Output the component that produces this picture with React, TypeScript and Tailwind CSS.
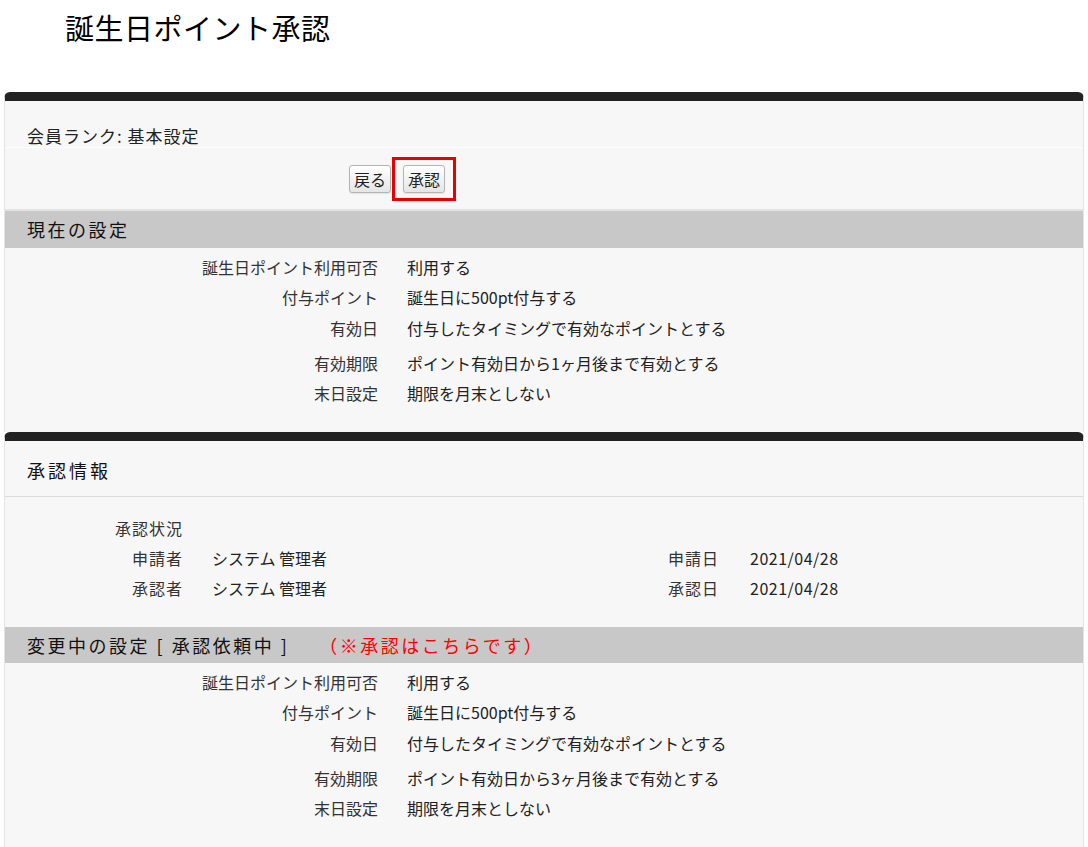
import type { ReactNode } from "react";

type Row = { label: string; value: string; gap?: string };

const currentRows: Row[] = [
  { label: "誕生日ポイント利用可否", value: "利用する" },
  { label: "付与ポイント", value: "誕生日に500pt付与する" },
  { label: "有効日", value: "付与したタイミングで有効なポイントとする", gap: "mt-[1px]" },
  { label: "有効期限", value: "ポイント有効日から1ヶ月後まで有効とする", gap: "mt-[5px]" },
  { label: "末日設定", value: "期限を月末としない" },
];

const pendingRows: Row[] = [
  { label: "誕生日ポイント利用可否", value: "利用する" },
  { label: "付与ポイント", value: "誕生日に500pt付与する" },
  { label: "有効日", value: "付与したタイミングで有効なポイントとする", gap: "mt-[1px]" },
  { label: "有効期限", value: "ポイント有効日から3ヶ月後まで有効とする", gap: "mt-[5px]" },
  { label: "末日設定", value: "期限を月末としない" },
];

function Panel({ children }: { children: ReactNode }) {
  return (
    <section className="mx-[4px] bg-[#f7f7f7] border-t-[9px] border-t-[#222] border-x border-x-[#e4e4e4] rounded-t-[6px]">
      {children}
    </section>
  );
}

function SettingRows({ rows }: { rows: Row[] }) {
  return (
    <div className="pt-[4px] pb-[24px] text-[16px]">
      {rows.map((row) => (
        <div key={row.label} className={`flex h-[30px] leading-[30px] ${row.gap ?? ""}`}>
          <div className="w-[373px] text-right text-[#333] whitespace-nowrap">{row.label}</div>
          <div className="pl-[29px] text-[#222] whitespace-nowrap">{row.value}</div>
        </div>
      ))}
    </div>
  );
}

function OldButton({ children }: { children: ReactNode }) {
  return (
    <button className="h-[28px] px-[4px] rounded-[3px] border border-[#b4b4b4] bg-gradient-to-b from-white to-[#e6e6e6] text-[16px] leading-[26px] text-[#222] shadow-[0_1px_1px_rgba(0,0,0,0.08)]">
      {children}
    </button>
  );
}

export default function App() {
  const people = [
    { label: "申請者", name: "システム 管理者", dateLabel: "申請日", date: "2021/04/28" },
    { label: "承認者", name: "システム 管理者", dateLabel: "承認日", date: "2021/04/28" },
  ];

  return (
    <div className="min-h-[847px] bg-white font-['Noto_Sans_CJK_JP',sans-serif] text-[#222]">
      <h1 className="h-[92px] pl-[65px] pt-[10px] text-[29px] leading-[34px] tracking-[0.5px] text-black">
        誕生日ポイント承認
      </h1>

      <Panel>
        <div className="h-[47px] pl-[22px] pt-[24px] text-[17px] leading-[22px] tracking-[1px] border-b border-white">
          会員ランク: 基本設定
        </div>
        <div className="flex items-center h-[63px] pl-[344px] border-b-2 border-[#e2e2e2]">
          <OldButton>戻る</OldButton>
          <div className="ml-[1px] flex items-center justify-center w-[64px] h-[44px] border-[3px] border-[#e60000]">
            <OldButton>承認</OldButton>
          </div>
        </div>
        <div className="h-[37px] bg-[#c8c8c8] pl-[22px] text-[18px] leading-[37px] tracking-[2.5px] text-[#111]">
          現在の設定
        </div>
        <SettingRows rows={currentRows} />
      </Panel>

      <Panel>
        <div className="h-[56px] pl-[22px] pt-[18px] text-[18px] leading-[22px] tracking-[3px] text-[#111] border-b border-[#dcdcdc]">
          承認情報
        </div>
        <div className="pt-[16px] pb-[24px] text-[16px]">
          <div className="flex h-[30px] leading-[30px]">
            <div className="w-[178px] text-right text-[#333] tracking-[1px]">承認状況</div>
          </div>
          {people.map((p) => (
            <div key={p.label} className="flex h-[30px] leading-[30px] whitespace-nowrap">
              <div className="w-[178px] text-right text-[#333] tracking-[1px]">{p.label}</div>
              <div className="w-[476px] pl-[29px]">{p.name}</div>
              <div className="w-[60px] text-right text-[#333] tracking-[1px]">{p.dateLabel}</div>
              <div className="pl-[31px] tracking-[0.5px]">{p.date}</div>
            </div>
          ))}
        </div>
        <div className="h-[36px] bg-[#c8c8c8] pl-[22px] text-[18px] leading-[36px] tracking-[2.5px] text-[#111] whitespace-nowrap">
          変更中の設定 [ 承認依頼中 ]
          <span className="ml-[30px] text-[#f00]">（※承認はこちらです）</span>
        </div>
        <SettingRows rows={pendingRows} />
      </Panel>
    </div>
  );
}
